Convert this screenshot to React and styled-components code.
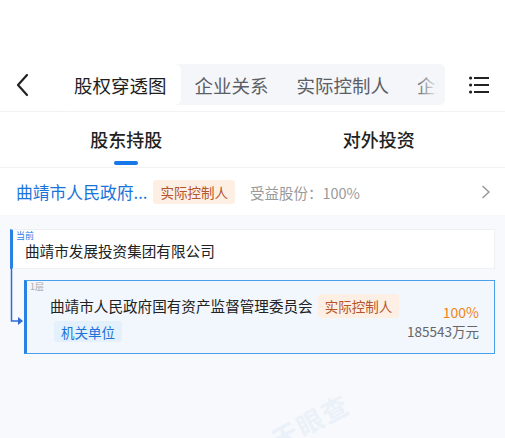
import React from 'react';
import styled, { createGlobalStyle } from 'styled-components';

const GlobalStyle = createGlobalStyle`
    html, body {
        margin:0;
        padding:0;
        background:#f7f9fc;
        font-family:"Noto Sans CJK SC", "Noto Sans", sans-serif;
    }
`;
const Page = styled.div`
    position:relative;
    width:505px;
    height:438px;
    overflow:hidden;
    background:#f7f9fc;
    display:flex;
    flex-direction:column;
`;
const Head = styled.div`
    background:#fff;
    padding-top:58px;
`;
const NavBar = styled.div`
    height:53px;
    display:flex;
    align-items:center;
    padding:0 0 0 12px;
    border-bottom:1px solid #f1f2f4;
`;
const IconBtn = styled.div`
    width:${p => p.w}px;
    flex:none;
    display:flex;
    align-items:center;
    justify-content:center;
    color:#222;
`;
const TabBox = styled.div`
    margin-left:26px;
    width:385px;
    flex:none;
    height:41px;
    background:#f4f6f9;
    border-radius:6px;
    display:flex;
    align-items:center;
    overflow:hidden;
    position:relative;
    &::after{
        content:'';
        position:absolute;
        right:0;
        top:0;
        bottom:0;
        width:30px;
        background:linear-gradient(to right, rgba(244,246,249,0), #f4f6f9 80%);
    }
`;
const NavTab = styled.div`
    flex:none;
    height:100%;
    padding:0 14px;
    display:flex;
    align-items:center;
    font-size:18.5px;
    color:${p => p.active ? '#1f1f1f' : '#5a5e66'};
    background:${p => p.active ? '#fff' : 'transparent'};
    border-radius:6px;
    white-space:nowrap;
`;
const SubTabs = styled.div`
    height:55px;
    display:grid;
    grid-template-columns:1fr 1fr;
    border-bottom:1px solid #f1f2f4;
`;
const SubTab = styled.div`
    position:relative;
    display:flex;
    align-items:center;
    justify-content:center;
    padding-bottom:2px;
    font-size:18px;
    font-weight:500;
    color:#222;
    &::after{
        content:'';
        display:${p => p.active ? 'block' : 'none'};
        position:absolute;
        bottom:2px;
        left:50%;
        width:24px;
        margin-left:-12px;
        height:4px;
        border-radius:2px;
        background:#1677e8;
    }
`;
const Summary = styled.div`
    height:47px;
    display:flex;
    align-items:center;
    padding:1px 16px 0 16px;
    box-sizing:border-box;
    background:#fff;
`;
const BlueName = styled.span`
    font-size:16.8px;
    color:#1a74d9;
`;
const Tag = styled.span`
    display:inline-flex;
    align-items:center;
    flex:none;
    height:${p => p.h || 23}px;
    padding:0 7px;
    margin-left:${p => p.ml || 0}px;
    font-size:13.5px;
    border-radius:3px;
    color:${p => p.blue ? '#1a74d9' : '#b4552d'};
    background:${p => p.blue ? '#e4f0fc' : '#fdefe4'};
    white-space:nowrap;
`;
const Muted = styled.span`
    margin-left:15px;
    font-size:14.5px;
    color:#9a9a9a;
`;
const Chevron = styled.div`
    margin-left:auto;
    margin-right:-2px;
    display:flex;
    color:#999;
`;
const Body = styled.div`
    flex:1;
    padding:14px 10px 0 10px;
`;
const CurrentCard = styled.div`
    position:relative;
    height:40px;
    background:#fff;
    border:1px solid #eef0f3;
    border-left:3px solid #2b82e6;
    display:flex;
    align-items:center;
    padding:2px 0 0 12px;
    box-sizing:border-box;
    font-size:14.6px;
    color:#222;
`;
const Corner = styled.span`
    position:absolute;
    left:3px;
    top:1px;
    font-size:9px;
    line-height:10px;
    color:${p => p.blue ? '#2b82e6' : '#aaa'};
`;
const Branch = styled.div`
    display:flex;
    margin-top:11px;
`;
const Connector = styled.div`
    width:14px;
    flex:none;
    position:relative;
`;
const LayerCard = styled.div`
    flex:1;
    position:relative;
    height:74px;
    box-sizing:border-box;
    background:#f1f7fd;
    border:1px solid #4aa0ea;
    border-left:3px solid #2b82e6;
    display:flex;
    align-items:center;
    padding:2px 15px 0 23px;
`;
const LayerInfo = styled.div`
    flex:1;
    min-width:0;
    display:flex;
    flex-direction:column;
    gap:1px;
`;
const NameLine = styled.div`
    display:flex;
    align-items:center;
    font-size:14.6px;
    color:#222;
    white-space:nowrap;
`;
const Stat = styled.div`
    flex:none;
    display:flex;
    flex-direction:column;
    align-items:flex-end;
    margin-top:8px;
`;
const Percent = styled.span`
    font-size:14px;
    color:#f08519;
    line-height:19px;
`;
const Amount = styled.span`
    font-size:13.5px;
    color:#666;
    line-height:19px;
`;
const Watermark = styled.div`
    position:absolute;
    left:268px;
    top:402px;
    font-size:26px;
    font-weight:700;
    color:#ebf1f8;
    transform:rotate(-28deg);
    letter-spacing:2px;
`;

export default function App() {
    return (
        <Page>
            <GlobalStyle />
            <Head>
                <NavBar>
                    <IconBtn w={22}>
                        <svg width="14" height="24" viewBox="0 0 14 24"><path d="M11 2 L2 12 L11 22" fill="none" stroke="#222" strokeWidth="2.2" strokeLinecap="round" strokeLinejoin="round" /></svg>
                    </IconBtn>
                    <TabBox>
                        <NavTab active>股权穿透图</NavTab>
                        <NavTab>企业关系</NavTab>
                        <NavTab>实际控制人</NavTab>
                        <NavTab>企业族谱</NavTab>
                    </TabBox>
                    <IconBtn w={68}>
                        <svg width="20" height="18" viewBox="0 0 20 18">
                            <circle cx="1.6" cy="2" r="1.6" fill="#222" />
                            <circle cx="1.6" cy="9" r="1.6" fill="#222" />
                            <circle cx="1.6" cy="16" r="1.6" fill="#222" />
                            <rect x="5" y="1" width="15" height="2" fill="#222" />
                            <rect x="5" y="8" width="15" height="2" fill="#222" />
                            <rect x="5" y="15" width="15" height="2" fill="#222" />
                        </svg>
                    </IconBtn>
                </NavBar>
                <SubTabs>
                    <SubTab active>股东持股</SubTab>
                    <SubTab>对外投资</SubTab>
                </SubTabs>
                <Summary>
                    <BlueName>曲靖市人民政府...</BlueName>
                    <Tag ml={6} h={24}>实际控制人</Tag>
                    <Muted>受益股份：100%</Muted>
                    <Chevron>
                        <svg width="10" height="14" viewBox="0 0 10 14"><path d="M2 1.5 L8 7 L2 12.5" fill="none" stroke="#999" strokeWidth="1.6" strokeLinecap="round" strokeLinejoin="round" /></svg>
                    </Chevron>
                </Summary>
            </Head>
            <Body>
                <CurrentCard>
                    <Corner blue>当前</Corner>
                    曲靖市发展投资集团有限公司
                </CurrentCard>
                <Branch>
                    <Connector>
                        <svg width="14" height="70" viewBox="0 0 14 70" style={{ position: 'absolute', left: 0, top: -12 }}>
                            <path d="M1.5 0 L1.5 53 L10 53" fill="none" stroke="#2f6bd6" strokeWidth="1.5" />
                            <path d="M8 49 L13 53 L8 57 Z" fill="#2f6bd6" />
                        </svg>
                    </Connector>
                    <LayerCard>
                        <Corner>1层</Corner>
                        <LayerInfo>
                            <NameLine>
                                曲靖市人民政府国有资产监督管理委员会
                                <Tag ml={5} h={24}>实际控制人</Tag>
                            </NameLine>
                            <div><Tag blue ml={4} h={21}>机关单位</Tag></div>
                        </LayerInfo>
                        <Stat>
                            <Percent>100%</Percent>
                            <Amount>185543万元</Amount>
                        </Stat>
                    </LayerCard>
                </Branch>
            </Body>
            <Watermark>天眼查</Watermark>
        </Page>
    );
}
